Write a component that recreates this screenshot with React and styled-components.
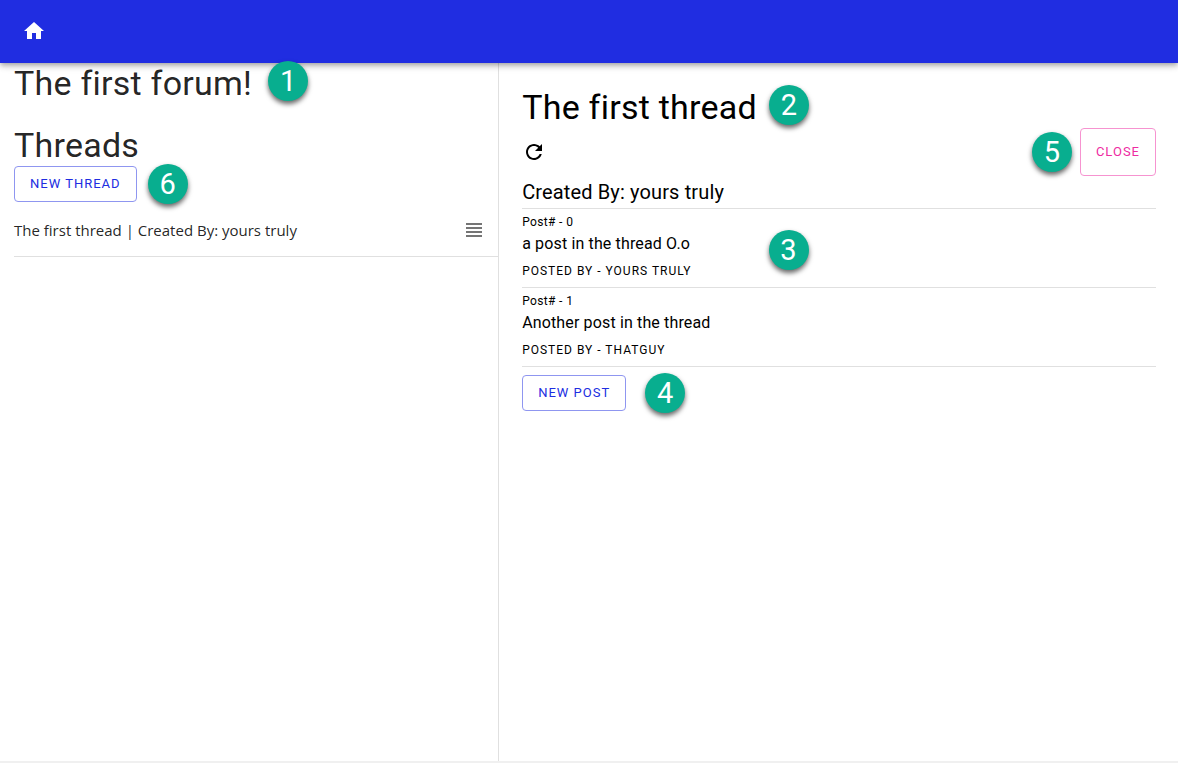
import React from "react";
import styled, { createGlobalStyle } from "styled-components";

const GlobalStyle = createGlobalStyle`
  *, *::before, *::after { box-sizing: border-box; }
  body {
    margin: 0;
    background: #fff;
    font-family: Roboto, "Liberation Sans", sans-serif;
    color: #000;
  }
`;

const Page = styled.div`
  display: flex;
  flex-direction: column;
  min-height: 100vh;
  border-bottom: 2px solid #f0f0f0;
`;

const AppBar = styled.header`
  position: relative;
  z-index: 1;
  display: flex;
  align-items: center;
  padding: 19px 22px 20px;
  background: #202de1;
  color: #fff;
  box-shadow: 0 2px 4px -1px rgba(0, 0, 0, 0.2), 0 4px 5px 0 rgba(0, 0, 0, 0.14),
    0 1px 10px 0 rgba(0, 0, 0, 0.12);
`;

const HomeLink = styled.a`
  display: flex;
  color: inherit;
`;

const Icon = styled.svg`
  display: block;
  width: 24px;
  height: 24px;
  fill: currentColor;
`;

const Columns = styled.main`
  flex: 1;
  display: grid;
  grid-template-columns: 25fr 34fr;
`;

const ForumPane = styled.section`
  padding-left: 14px;
  border-right: 1px solid #e0e0e0;
  color: rgba(0, 0, 0, 0.87);
`;

const ThreadPane = styled.section`
  padding: 24px 22px 24px 23px;
`;

const Anchor = styled.span`
  position: relative;
  display: inline-block;
  vertical-align: top;
`;

const Badge = styled.span`
  position: absolute;
  z-index: 2;
  top: calc(50% - 20px);
  ${(p) => p.$side || "left"}: calc(100% + ${(p) => p.$gap}px);
  display: flex;
  align-items: center;
  justify-content: center;
  width: 40px;
  height: 40px;
  border-radius: 50%;
  background: #08ae8f;
  color: #fff;
  font-size: 29px;
  line-height: 40px;
  font-weight: 400;
  letter-spacing: normal;
  box-shadow: 0 3px 5px rgba(0, 0, 0, 0.6);
`;

const Title = styled.h1`
  margin: 0 0 ${(p) => p.$gap || 0}px;
  font-size: 34px;
  line-height: 41px;
  font-weight: 400;
  letter-spacing: 0.007em;

  ${Badge} {
    top: auto;
    bottom: 3px;
  }
`;

const OutlinedButton = styled.button`
  display: block;
  height: ${(p) => (p.$tall ? 48 : 36)}px;
  padding: 0 15px 1px;
  border: 1px solid ${(p) => (p.$accent ? "#f693d0" : "#8f96f0")};
  border-radius: 4px;
  background: transparent;
  color: ${(p) => (p.$accent ? "#ee2ba2" : "#202de1")};
  font: 400 13px/24px Roboto, "Liberation Sans", sans-serif;
  letter-spacing: 1px;
  text-transform: uppercase;
  cursor: pointer;
`;

const ThreadList = styled.ul`
  margin: 0;
  padding: 2px 0 0;
  list-style: none;
`;

const ThreadRow = styled.li`
  display: flex;
  align-items: center;
  justify-content: space-between;
  height: 53px;
  padding-right: 12px;
  border-bottom: 1px solid #e0e0e0;
  font-family: "Open Sans", "Noto Sans", sans-serif;
  font-size: 15px;
  line-height: 24px;
`;

const IconButton = styled.button`
  padding: 0;
  border: 0;
  background: none;
  color: ${(p) => p.$color || "#000"};
  cursor: pointer;
`;

const Toolbar = styled.div`
  display: flex;
  align-items: center;
  justify-content: space-between;
`;

const CreatedBy = styled.h2`
  margin: 0;
  border-bottom: 1px solid #e0e0e0;
  font-size: 20px;
  line-height: 32px;
  font-weight: 400;
  letter-spacing: 0.007em;
`;

const Post = styled.article`
  padding-top: 3px;
  border-bottom: 1px solid #e0e0e0;
`;

const PostContent = styled.div`
  position: relative;
  width: fit-content;
`;

const PostNumber = styled.div`
  font-size: 12px;
  line-height: 20px;
  letter-spacing: 0.03em;
`;

const PostBody = styled.p`
  margin: 0;
  font-size: 16px;
  line-height: 24px;
  letter-spacing: 0.009em;
`;

const PostAuthor = styled.div`
  font-size: 12px;
  line-height: 31px;
  letter-spacing: 1px;
  text-transform: uppercase;
`;

const PostActions = styled.div`
  padding-top: 8px;
`;

const posts = [
  { body: "a post in the thread O.o", author: "yours truly", marker: 3 },
  { body: "Another post in the thread", author: "thatguy" },
];

export default function App() {
  return (
    <Page>
      <GlobalStyle />
      <AppBar>
        <HomeLink href="#" aria-label="Home">
          <Icon viewBox="0 0 24 24">
            <path d="M10 20v-6h4v6h5v-8h3L12 3 2 12h3v8z" />
          </Icon>
        </HomeLink>
      </AppBar>
      <Columns>
        <ForumPane>
          <Title $gap={21}>
            <Anchor>
              The first forum!
              <Badge $gap={16}>1</Badge>
            </Anchor>
          </Title>
          <Title as="h2">Threads</Title>
          <Anchor>
            <OutlinedButton type="button">New thread</OutlinedButton>
            <Badge $gap={11}>6</Badge>
          </Anchor>
          <ThreadList>
            <ThreadRow>
              <span>The first thread | Created By: yours truly</span>
              <IconButton type="button" aria-label="Open thread" $color="#757575">
                <Icon viewBox="0 0 24 24">
                  <path d="M4 15h16v-2H4v2zm0 4h16v-2H4v2zm0-8h16V9H4v2zm0-6v2h16V5H4z" />
                </Icon>
              </IconButton>
            </ThreadRow>
          </ThreadList>
        </ForumPane>
        <ThreadPane>
          <Title>
            <Anchor>
              The first thread
              <Badge $gap={12}>2</Badge>
            </Anchor>
          </Title>
          <Toolbar>
            <IconButton type="button" aria-label="Refresh">
              <Icon viewBox="0 0 24 24">
                <path d="M17.65 6.35C16.2 4.9 14.21 4 12 4c-4.42 0-7.99 3.58-7.99 8s3.57 8 7.99 8c3.73 0 6.84-2.55 7.73-6h-2.08c-.82 2.33-3.04 4-5.65 4-3.31 0-6-2.69-6-6s2.69-6 6-6c1.66 0 3.14.69 4.22 1.78L13 11h7V4l-2.35 2.35z" />
              </Icon>
            </IconButton>
            <Anchor>
              <OutlinedButton type="button" $accent $tall>
                Close
              </OutlinedButton>
              <Badge $side="right" $gap={8}>5</Badge>
            </Anchor>
          </Toolbar>
          <CreatedBy>Created By: yours truly</CreatedBy>
          {posts.map((post, i) => (
            <Post key={post.author}>
              <PostContent>
                <PostNumber>Post# - {i}</PostNumber>
                <PostBody>{post.body}</PostBody>
                <PostAuthor>Posted by - {post.author}</PostAuthor>
                {post.marker && <Badge $gap={77}>{post.marker}</Badge>}
              </PostContent>
            </Post>
          ))}
          <PostActions>
            <Anchor>
              <OutlinedButton type="button">New post</OutlinedButton>
              <Badge $gap={19}>4</Badge>
            </Anchor>
          </PostActions>
        </ThreadPane>
      </Columns>
    </Page>
  );
}
